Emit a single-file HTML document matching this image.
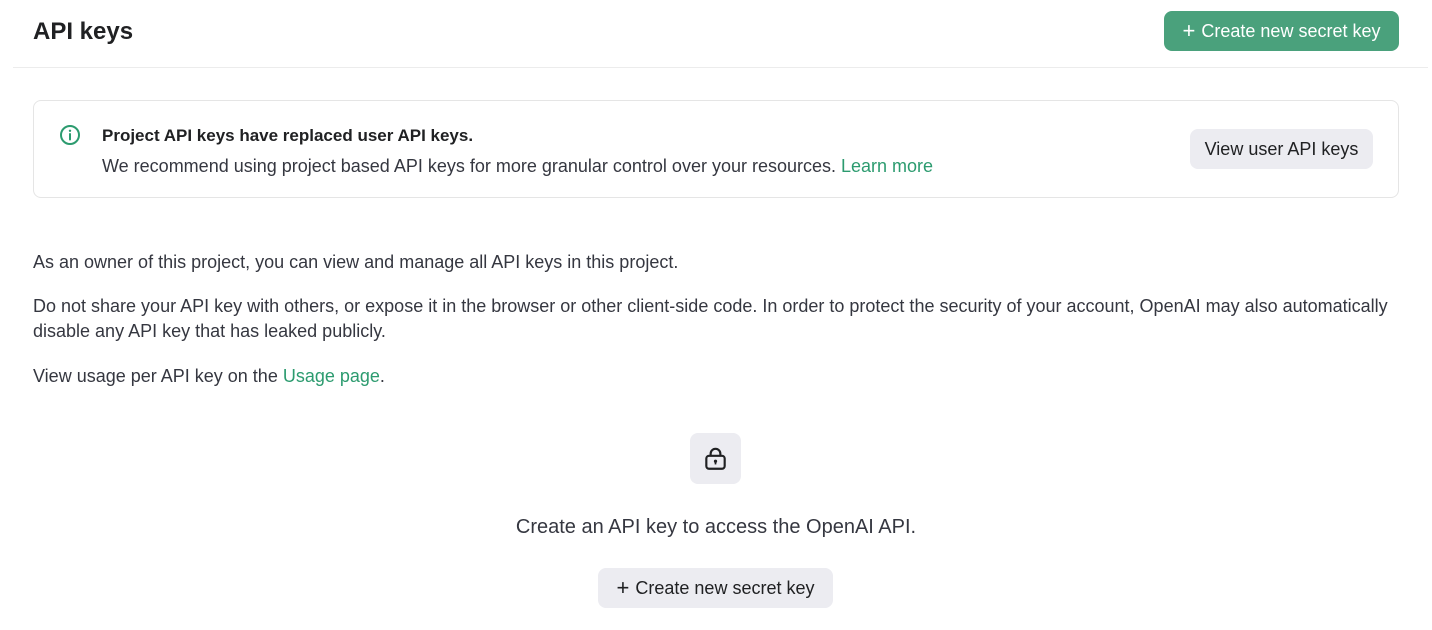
<!DOCTYPE html>
<html><head><meta charset="utf-8"><style>
*{margin:0;padding:0;box-sizing:border-box}
body{width:1432px;height:630px;background:#fff;font-family:"Liberation Sans",sans-serif;color:#353740;position:relative;overflow:hidden}
.a{position:absolute;white-space:nowrap}
.btn{position:absolute;display:flex;align-items:center;justify-content:center;border-radius:8px;font-size:18px;font-weight:500}
a{color:#2c9b6f;text-decoration:none}
p{position:absolute;left:33px;font-size:18px;color:#353740;white-space:nowrap}
</style></head><body>
<div class="a" style="left:33px;top:18px;font-size:24px;font-weight:700;color:#202123">API keys</div>
<div class="btn" style="left:1164px;top:11px;width:235px;height:40px;background:#4aa17c;color:#fff"><span style="font-size:22px;margin-right:6px;font-weight:300">+</span>Create new secret key</div>
<div class="a" style="left:13px;top:67px;width:1415px;height:1px;background:#ececec"></div>
<div class="a" style="left:33px;top:100px;width:1366px;height:98px;border:1px solid #e5e5e5;border-radius:8px"></div>
<svg class="a" style="left:59px;top:124px" width="22" height="22" viewBox="0 0 22 22"><circle cx="11" cy="11" r="9" fill="none" stroke="#2c9b6f" stroke-width="2"/><line x1="11" y1="10" x2="11" y2="15.5" stroke="#2c9b6f" stroke-width="2" stroke-linecap="round"/><circle cx="11" cy="6.8" r="1.2" fill="#2c9b6f"/></svg>
<div class="a" style="left:102px;top:126px;font-size:17px;font-weight:700;color:#202123">Project API keys have replaced user API keys.</div>
<div class="a" style="left:102px;top:156px;font-size:18px">We recommend using project based API keys for more granular control over your resources. <a>Learn more</a></div>
<div class="btn" style="left:1190px;top:129px;width:183px;height:40px;background:#ececf1;color:#202123">View user API keys</div>
<p style="top:252px">As an owner of this project, you can view and manage all API keys in this project.</p>
<p style="top:296px">Do not share your API key with others, or expose it in the browser or other client-side code. In order to protect the security of your account, OpenAI may also automatically</p>
<p style="top:321px">disable any API key that has leaked publicly.</p>
<p style="top:366px">View usage per API key on the <a>Usage page</a>.</p>
<div class="a" style="left:690px;top:433px;width:51px;height:51px;background:#ececf1;border-radius:8px"></div>
<svg class="a" style="left:702px;top:445px" width="27" height="27" viewBox="0 0 25 25"><rect x="4" y="10" width="17" height="12" rx="2.5" fill="none" stroke="#202123" stroke-width="2"/><path d="M8 10V8a4.5 4.5 0 0 1 9 0v2" fill="none" stroke="#202123" stroke-width="2"/><circle cx="12.5" cy="15" r="1.5" fill="#202123"/><line x1="12.5" y1="15" x2="12.5" y2="18" stroke="#202123" stroke-width="1.6"/></svg>
<div class="a" style="left:0;width:1432px;text-align:center;top:516px;font-size:20px;font-weight:500;color:#353740">Create an API key to access the OpenAI API.</div>
<div class="btn" style="left:598px;top:568px;width:235px;height:40px;background:#ececf1;color:#202123"><span style="font-size:22px;margin-right:6px;font-weight:300">+</span>Create new secret key</div>
</body></html>
